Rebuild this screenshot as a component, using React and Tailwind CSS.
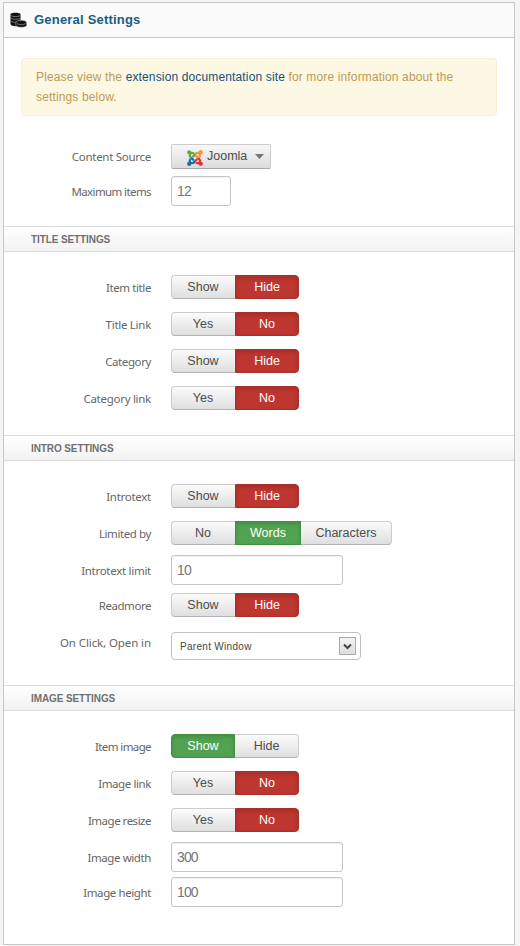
import React from "react";
import { FaJoomla } from "react-icons/fa";

function Row({ label, className = "", labelClass = "mt-0.5", tracking = "tracking-[-0.28px]", children }) {
  return (
    <div className={`flex items-center ${className}`}>
      <div className={`w-[147px] shrink-0 text-right font-['Noto_Sans',sans-serif] text-[11.5px] leading-4 text-[#666] ${tracking} ${labelClass}`}>
        {label}
      </div>
      <div className="ml-5 flex">{children}</div>
    </div>
  );
}

const tones = {
  off: "border border-[#ccc] border-b-[#b3b3b3] bg-gradient-to-b from-[#fbfbfb] to-[#dfdfdf] text-[#4d4d4d]",
  red: "border border-[#a92f2a] bg-[#bd362f] text-white shadow-[inset_0_2px_4px_rgba(0,0,0,0.15)]",
  green: "border border-[#42903f] bg-[#51a351] text-white shadow-[inset_0_2px_4px_rgba(0,0,0,0.15)]",
};

function Toggle({ items }) {
  return items.map(([text, tone = "off", width = "w-16"]) => (
    <button
      key={text}
      type="button"
      className={`flex h-6 items-center justify-center pb-px text-[12.5px] leading-5 first:rounded-l last:rounded-r ${width} ${tones[tone]} ${tone === "off" ? "first:border-r-0 first:pr-px last:border-l-0" : ""}`}
    >
      {text}
    </button>
  ));
}

function Field({ value, width = "w-[172px]" }) {
  return (
    <input
      className={`h-[30px] rounded-[3px] border border-[#c6c6c6] bg-white px-[5px] text-[14px] tracking-[-0.9px] text-[#777] shadow-[inset_0_1px_1px_rgba(0,0,0,0.06)] outline-none ${width}`}
      defaultValue={value}
    />
  );
}

function SectionTitle({ children, className = "" }) {
  return (
    <h3 className={`flex h-[26px] items-center border-y border-[#dcdcdc] bg-gradient-to-b from-white to-[#f2f2f2] pl-[27px] text-[10px] font-bold tracking-[-0.1px] text-[#707070] ${className}`}>
      {children}
    </h3>
  );
}

function DatabaseIcon() {
  return (
    <svg width="17" height="16" viewBox="0 0 17 16" className="shrink-0">
      <path d="M0.5 2.2C0.5 0.2 10.5 0.2 10.5 2.2V8L6 10V14.2C2.5 14 0.5 13 0.5 12Z" fill="#111" />
      <path d="M0.8 3.5C2.5 5 8.5 5 10.2 3.5M0.8 6.2C2.5 7.7 8.5 7.7 10.2 6.2M0.8 9C2 10.2 4.5 10.4 6 10.2" fill="none" stroke="#999" strokeWidth="0.7" />
      <path d="M5.8 10.8C5.8 7.5 16.7 7.5 16.7 10.8V13.2C16.7 16 5.8 16 5.8 13.2Z" fill="#111" stroke="#fafafa" strokeWidth="0.4" />
      <path d="M6.8 11.5C8.5 13 14 13 15.8 11.5" fill="none" stroke="#999" strokeWidth="0.7" />
    </svg>
  );
}

function JoomlaIcon() {
  return (
    <span className="relative block h-[18px] w-[18px]">
      <FaJoomla className="absolute inset-0 h-[18px] w-[18px] text-[#62a83a] [clip-path:polygon(0_0,50%_0,50%_50%,0_50%)]" />
      <FaJoomla className="absolute inset-0 h-[18px] w-[18px] text-[#f5923e] [clip-path:polygon(50%_0,100%_0,100%_50%,50%_50%)]" />
      <FaJoomla className="absolute inset-0 h-[18px] w-[18px] text-[#1f69a8] [clip-path:polygon(0_50%,50%_50%,50%_100%,0_100%)]" />
      <FaJoomla className="absolute inset-0 h-[18px] w-[18px] text-[#e8302a] [clip-path:polygon(50%_50%,100%_50%,100%_100%,50%_100%)]" />
    </span>
  );
}

export default function App() {
  return (
    <div className="h-[946px] w-[520px] bg-[#f4f4f4] pl-[3px] pt-[2px] font-['Liberation_Sans',Arial,sans-serif]">
      <main className="h-[943px] w-[512px] border border-[#c8c8c8] bg-white">
        <header className="flex h-[35px] items-center border-b border-[#c8c8c8] bg-[#fafafa] pl-1.5">
          <DatabaseIcon />
          <h2 className="ml-[7px] text-[13px] font-bold tracking-[0.2px] text-[#1a5a85]">General Settings</h2>
        </header>

        <div className="ml-[17px] mt-5 h-[58px] w-[476px] rounded border border-[#fbeed5] bg-[#fcf8e3] pl-3.5 pt-2 text-[12px] leading-5 tracking-[0.14px] text-[#c09853]">
          Please view the <a className="text-[#14507a]">extension documentation site</a> for more information about the<br />settings below.
        </div>

        <Row label="Content Source" className="mt-7 h-[25px]" labelClass="mt-px">
          <button type="button" className="flex h-[25px] w-[100px] items-center rounded-[2px] border border-[#ccc] border-b-[#aaa] bg-gradient-to-b from-[#f8f8f8] to-[#dcdcdc] pl-3.5 text-[12.5px] text-[#4d4d4d]">
            <span className="pt-[3px]"><JoomlaIcon /></span>
            <span className="ml-[3px]">Joomla</span>
            <svg width="9" height="5" viewBox="0 0 9 5" className="ml-2"><path d="M0 0H9L4.5 5Z" fill="#777" /></svg>
          </button>
        </Row>
        <Row label="Maximum items" tracking="tracking-[-0.6px]" className="mt-[7px] h-[30px]"><Field value="12" width="w-[60px]" /></Row>

        <SectionTitle className="mt-5">TITLE SETTINGS</SectionTitle>
        <div className="mt-[23px] flex flex-col gap-[13px]">
          <Row label="Item title" tracking="tracking-[-0.4px]"><Toggle items={[["Show"], ["Hide", "red"]]} /></Row>
          <Row label="Title Link"><Toggle items={[["Yes"], ["No", "red"]]} /></Row>
          <Row label="Category" tracking="tracking-[-0.4px]"><Toggle items={[["Show"], ["Hide", "red"]]} /></Row>
          <Row label="Category link"><Toggle items={[["Yes"], ["No", "red"]]} /></Row>
        </div>

        <SectionTitle className="mt-[25px]">INTRO SETTINGS</SectionTitle>
        <Row label="Introtext" className="mt-[23px]"><Toggle items={[["Show"], ["Hide", "red"]]} /></Row>
        <Row label="Limited by" tracking="tracking-[-0.4px]" className="mt-[13px]">
          <Toggle items={[["No"], ["Words", "green", "w-[66px]"], ["Characters", "off", "w-[91px]"]]} />
        </Row>
        <Row label="Introtext limit" className="mt-[10px]"><Field value="10" /></Row>
        <Row label="Readmore" tracking="tracking-[-0.45px]" className="mt-2"><Toggle items={[["Show"], ["Hide", "red"]]} /></Row>
        <Row label="On Click, Open in" tracking="tracking-[-0.1px]" className="mt-[15px]" labelClass="-mt-1.5">
          <button type="button" className="flex h-7 w-[190px] items-center justify-between rounded border border-[#c0c0c0] bg-white pl-2 pr-1 text-[10px] tracking-[0.3px] text-[#444]">
            Parent Window
            <span className="flex h-[18px] w-[17px] items-center justify-center border border-[#aaa] bg-gradient-to-b from-[#f4f4f4] to-[#ddd]">
              <svg width="9" height="7" viewBox="0 0 9 7"><path d="M1 1.5L4.5 5L8 1.5" fill="none" stroke="#444" strokeWidth="2" /></svg>
            </span>
          </button>
        </Row>

        <SectionTitle className="mt-[25px]">IMAGE SETTINGS</SectionTitle>
        <div className="mt-[23px] flex flex-col gap-[13px]">
          <Row label="Item image" tracking="tracking-[-0.6px]"><Toggle items={[["Show", "green"], ["Hide"]]} /></Row>
          <Row label="Image link" tracking="tracking-[-0.4px]"><Toggle items={[["Yes"], ["No", "red"]]} /></Row>
          <Row label="Image resize" tracking="tracking-[-0.5px]"><Toggle items={[["Yes"], ["No", "red"]]} /></Row>
        </div>
        <Row label="Image width" tracking="tracking-[-0.4px]" className="mt-[10px]"><Field value="300" /></Row>
        <Row label="Image height" tracking="tracking-[-0.4px]" className="mt-[5px]"><Field value="100" /></Row>
      </main>
    </div>
  );
}
